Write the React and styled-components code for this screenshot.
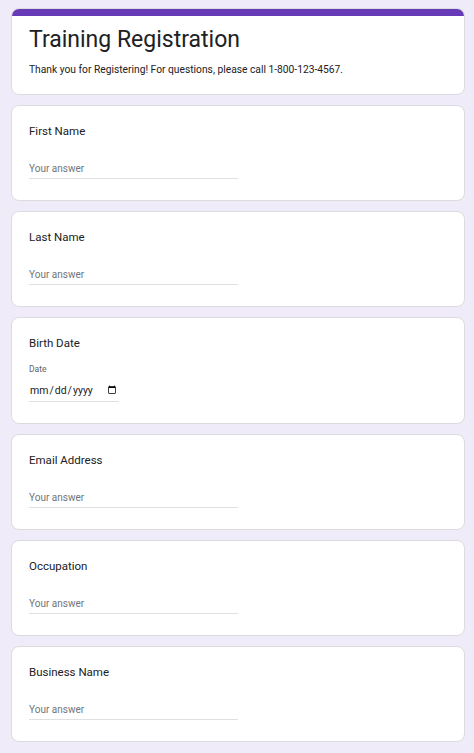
import React from 'react';
import styled, { createGlobalStyle } from 'styled-components';

const GlobalStyle = createGlobalStyle`
  html, body {
    margin: 0;
    padding: 0;
    background-color: #f0ebf8;
  }
  body {
    font-family: Roboto, 'Noto Sans', Arial, sans-serif;
  }
`;

const App = () => {
  return (
    <>
      <GlobalStyle />
      <FormWrapper>
        <HeaderCard>
          <HeaderBand />
          <HeaderBody>
            <FormTitle>Training Registration</FormTitle>
            <FormDescription>
              Thank you for Registering! For questions, please call 1-800-123-4567.
            </FormDescription>
          </HeaderBody>
        </HeaderCard>
        {QUESTIONS.slice(0, 2).map(data => (
          <QuestionCard key={data.id}>
            <QuestionLabel>{data.label}</QuestionLabel>
            <AnswerInput placeholder="Your answer" />
          </QuestionCard>
        ))}
        <QuestionCard>
          <QuestionLabel>Birth Date</QuestionLabel>
          <DateLabel>Date</DateLabel>
          <DateInput type="date" />
        </QuestionCard>
        {QUESTIONS.slice(2).map(data => (
          <QuestionCard key={data.id}>
            <QuestionLabel>{data.label}</QuestionLabel>
            <AnswerInput placeholder="Your answer" />
          </QuestionCard>
        ))}
      </FormWrapper>
    </>
  );
};

export default App;

const FormWrapper = styled.div`
  width: 454px;
  padding: 8px 9px 10px 11px;
  display: flex;
  flex-direction: column;
  gap: 10px;
`;

const HeaderCard = styled.div`
  background-color: white;
  border: 1px solid #dadce0;
  border-radius: 8px;
  overflow: hidden;
`;

const HeaderBand = styled.div`
  height: 7px;
  background-color: #673ab7;
`;

const HeaderBody = styled.div`
  padding: 9px 17px 16px;
`;

const FormTitle = styled.h1`
  margin: 0;
  font-family: Roboto, sans-serif;
  font-size: 23px;
  font-weight: 400;
  line-height: 30px;
  color: #202124;
`;

const FormDescription = styled.p`
  margin: 7px 0 0;
  font-size: 10.25px;
  line-height: 16px;
  color: #202124;
`;

const QuestionCard = styled.div`
  background-color: white;
  border: 1px solid #dadce0;
  border-radius: 8px;
  padding: 17px 17px 21px;
  display: flex;
  flex-direction: column;
  align-items: flex-start;
`;

const QuestionLabel = styled.div`
  font-family: Roboto, sans-serif;
  font-size: 11.5px;
  line-height: 16px;
  color: #202124;
`;

const AnswerInput = styled.input`
  margin-top: 19px;
  width: 209px;
  height: 20px;
  padding: 0;
  border: none;
  border-bottom: 1px solid #e0e0e0;
  outline: none;
  font-family: Roboto, sans-serif;
  font-size: 10px;
  color: #202124;
  background: transparent;

  &::placeholder {
    color: #70757a;
  }
`;

const DateLabel = styled.div`
  margin-top: 12px;
  font-size: 8.5px;
  line-height: 12px;
  color: #5f6368;
`;

const DateInput = styled.input`
  margin-top: 5px;
  width: 90px;
  height: 21px;
  padding: 0;
  border: none;
  border-bottom: 1px solid #e0e0e0;
  outline: none;
  font-family: Roboto, sans-serif;
  font-size: 10.5px;
  color: #202124;
  background: transparent;
`;

const QUESTIONS = [
  {
    id: 1,
    label: 'First Name',
  },
  {
    id: 2,
    label: 'Last Name',
  },
  {
    id: 3,
    label: 'Email Address',
  },
  {
    id: 4,
    label: 'Occupation',
  },
  {
    id: 5,
    label: 'Business Name',
  },
];
